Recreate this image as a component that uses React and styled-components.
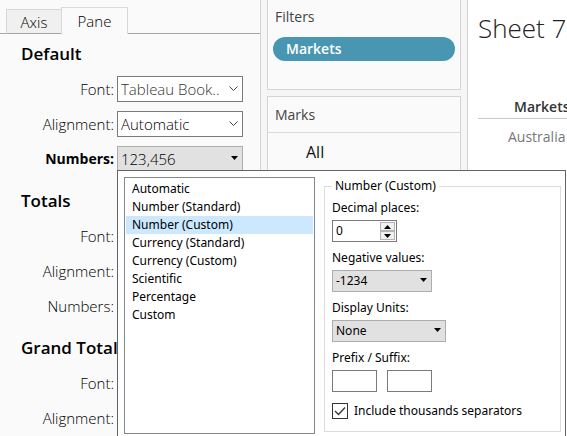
import React, { useState } from "react";
import styled, { createGlobalStyle, css } from "styled-components";

const Global = createGlobalStyle`
  *, *::before, *::after { box-sizing: border-box; }
  body { margin: 0; background: #fff; overflow: hidden; }
  button, input, select { font: inherit; color: inherit; margin: 0; border-radius: 0; }
`;

const Workspace = styled.div`
  display: grid;
  grid-template-columns: 261px 207px 1fr;
  height: 100vh;
  overflow: hidden;
  font-family: "Open Sans", "Noto Sans", sans-serif;
  font-weight: 300;
  font-size: 15px;
  line-height: 20px;
  color: #000;
`;

const FormatPane = styled.aside`
  background: #fafafa;
  border-right: 1px solid #d4d4d4;
`;

const TabBar = styled.div`
  display: flex;
  align-items: flex-end;
  height: 34px;
  padding-left: 6px;
  box-shadow: inset 0 -1px #a6a6a6;
`;

const Tab = styled.button`
  height: ${(p) => (p.$active ? 27 : 25)}px;
  width: ${(p) => (p.$active ? 67 : 55)}px;
  padding: 0;
  border: 1px solid #d9d9d9;
  border-bottom: ${(p) => (p.$active ? "0" : "1px solid #a6a6a6")};
  border-right-width: ${(p) => (p.$active ? 1 : 0)}px;
  background: ${(p) => (p.$active ? "#fafafa" : "#f0f0f0")};
`;

const Section = styled.section`
  height: 147px;
  padding: 10px 17px 0 21px;
`;

const SectionTitle = styled.h2`
  margin: 0 0 12px;
  font-size: 17px;
  line-height: 20px;
  font-weight: 600;
  color: #000;
  white-space: nowrap;
`;

const Row = styled.div`
  position: relative;
  display: grid;
  grid-template-columns: 93px 1fr;
  column-gap: 3px;
  align-items: center;
  height: 26px;
  margin-bottom: 9px;
`;

const RowLabel = styled.label`
  justify-self: end;
  font-size: ${(p) => (p.$strong ? 14 : 15)}px;
  font-weight: ${(p) => (p.$strong ? 700 : 300)};
`;

const Picker = styled.div`
  position: relative;
  display: flex;
  svg {
    position: absolute;
    right: 5px;
    top: 50%;
    margin-top: -3px;
    pointer-events: none;
  }
`;

const Select = styled.select`
  appearance: none;
  width: 100%;
  height: ${(p) => (p.$compact ? 22 : 26)}px;
  padding: 0 3px;
  border: 1px solid ${(p) => (p.$filled ? "#adadad" : "#7a7a7a")};
  background: ${(p) => (p.$filled ? "#e1e1e1" : "#fff")};
  color: ${(p) => (p.$muted ? "#333" : "#000")};
`;

const Shelves = styled.div`
  display: flex;
  flex-direction: column;
  gap: 6px;
  padding: 0 6px;
  background: #f5f5f5;
  border-right: 1px solid #d4d4d4;
`;

const Card = styled.section`
  background: #fafafa;
  border: 1px solid #d4d4d4;
  border-top-width: ${(p) => (p.$first ? 0 : 1)}px;
  ${(p) => (p.$first ? css`height: 90px;` : css`flex: 1;`)}
`;

const CardTitle = styled.h3`
  margin: 0;
  padding: ${(p) => (p.$ruled ? "8px 7px 7px" : "7px 7px 10px")};
  font-size: 14px;
  line-height: 20px;
  font-weight: 400;
  color: #444;
  border-bottom: ${(p) => (p.$ruled ? "1px solid #dcdcdc" : "0")};
`;

const Pill = styled.button`
  display: block;
  width: calc(100% - 10px);
  height: 24px;
  margin: 0 5px;
  padding: 0 13px;
  border: 0;
  border-radius: 12px;
  background: #4996b2;
  color: #fff;
  font-size: 14px;
  font-weight: 600;
  text-align: left;
`;

const MarksItem = styled.div`
  padding: 9px 38px;
  font-size: 16px;
  font-weight: 400;
  color: #111;
`;

const Sheet = styled.main`
  min-width: 0;
  padding: 12px 0 0 10px;
  background: #fff;
  overflow: hidden;
`;

const SheetTitle = styled.h1`
  margin: 0 0 52px;
  font-size: 26px;
  line-height: 32px;
  font-weight: 300;
  color: #222;
  white-space: nowrap;
`;

const Crosstab = styled.table`
  width: 100%;
  border-collapse: collapse;
  font-size: 14px;
  line-height: 20px;
  th {
    height: 22px;
    padding: 0 0 0 36px;
    border-bottom: 1px solid #c8c8c8;
    text-align: left;
    font-weight: 600;
    color: #333;
  }
  td {
    height: 38px;
    padding: 0 0 0 30px;
    font-weight: 400;
    color: #777;
  }
`;

const Popup = styled.div`
  position: absolute;
  z-index: 2;
  left: 96px;
  top: 24px;
  display: grid;
  grid-template-columns: 191px 237px;
  gap: 9px;
  width: 449px;
  height: 280px;
  padding: 6px;
  background: #fff;
  border: 1px solid #646464;
  font-family: "Noto Sans", sans-serif;
  font-weight: 400;
  font-size: 12px;
  line-height: 18px;
  color: #000;
`;

const FormatList = styled.select`
  height: 257px;
  padding: 2px 1px;
  border: 1px solid #828790;
  background: #fff;
  overflow: hidden;
  outline: 0;
  option {
    height: 18px;
    min-height: 18px;
    padding: 0 6px;
    line-height: 18px;
    color: #000;
  }
  option:checked {
    background: #cce8ff linear-gradient(#cce8ff, #cce8ff);
    color: #000;
  }
`;

const Options = styled.fieldset`
  height: 255px;
  margin: 0;
  padding: 4px 7px 0;
  border: 1px solid #dcdcdc;
  legend {
    padding: 0 3px;
    line-height: 18px;
  }
`;

const Field = styled.div`
  display: flex;
  flex-direction: column;
  align-items: flex-start;
  gap: 3px;
  height: 50px;
`;

const FieldLabel = styled.label`
  line-height: 18px;
`;

const Sized = styled.div`
  width: ${(p) => p.$width}px;
`;

const Spinner = styled.div`
  display: flex;
  width: 65px;
  height: 22px;
  padding: 1px;
  border: 1px solid #7a7a7a;
  input {
    flex: 1;
    min-width: 0;
    padding: 0 2px;
    border: 0;
    outline: 0;
    background: none;
  }
`;

const SpinButtons = styled.div`
  display: grid;
  grid-template-rows: 1fr 1fr;
  width: 15px;
  button {
    display: grid;
    place-items: center;
    min-height: 0;
    padding: 0;
    border: 1px solid #b4b4b4;
    background: #f0f0f0;
  }
`;

const Affixes = styled.div`
  display: flex;
  gap: 10px;
`;

const TextBox = styled.input`
  width: 45px;
  height: 22px;
  padding: 0 3px;
  border: 1px solid #7a7a7a;
`;

const CheckLabel = styled.label`
  display: flex;
  align-items: center;
  gap: 6px;
  height: 18px;
  margin-top: 3px;
  white-space: nowrap;
`;

const CheckBox = styled.span`
  display: grid;
  width: 16px;
  height: 16px;
  border: 1px solid #333;
  input {
    grid-area: 1 / 1;
    appearance: none;
    width: 14px;
    height: 14px;
  }
  svg {
    grid-area: 1 / 1;
    pointer-events: none;
  }
`;

const Chevron = () => (
  <svg width="9" height="5" viewBox="0 0 9 5" aria-hidden="true">
    <path d="M.5 .5 4.5 4.5 8.5 .5" fill="none" stroke="#444" />
  </svg>
);

const Arrow = ({ up }) => (
  <svg width="7" height="4" viewBox="0 0 7 4" aria-hidden="true">
    <path d={up ? "M0 4 3.5 0 7 4z" : "M0 0h7L3.5 4z"} fill="#000" />
  </svg>
);

function Dropdown({ id, value, filled, muted, compact }) {
  return (
    <Picker>
      <Select id={id} defaultValue={value} $filled={filled} $muted={muted} $compact={compact}>
        <option>{value}</option>
      </Select>
      {filled ? <Arrow /> : <Chevron />}
    </Picker>
  );
}

const formats = [
  "Automatic",
  "Number (Standard)",
  "Number (Custom)",
  "Currency (Standard)",
  "Currency (Custom)",
  "Scientific",
  "Percentage",
  "Custom",
];

function NumberFormatPopup() {
  const [places, setPlaces] = useState(0);
  const [separators, setSeparators] = useState(true);
  return (
    <Popup role="dialog" aria-label="Number format">
      <FormatList size={14} defaultValue="Number (Custom)" aria-label="Format">
        {formats.map((f) => (
          <option key={f}>{f}</option>
        ))}
      </FormatList>
      <Options>
        <legend>Number (Custom)</legend>
        <Field>
          <FieldLabel htmlFor="places">Decimal places:</FieldLabel>
          <Spinner>
            <input
              id="places"
              value={places}
              onChange={(e) => setPlaces(Number(e.target.value) || 0)}
            />
            <SpinButtons>
              <button aria-label="Increase" onClick={() => setPlaces(places + 1)}>
                <Arrow up />
              </button>
              <button aria-label="Decrease" onClick={() => setPlaces(Math.max(0, places - 1))}>
                <Arrow />
              </button>
            </SpinButtons>
          </Spinner>
        </Field>
        <Field>
          <FieldLabel htmlFor="negative">Negative values:</FieldLabel>
          <Sized $width={100}>
            <Dropdown id="negative" value="-1234" filled compact />
          </Sized>
        </Field>
        <Field>
          <FieldLabel htmlFor="units">Display Units:</FieldLabel>
          <Sized $width={114}>
            <Dropdown id="units" value="None" filled compact />
          </Sized>
        </Field>
        <Field>
          <FieldLabel htmlFor="prefix">Prefix / Suffix:</FieldLabel>
          <Affixes>
            <TextBox id="prefix" />
            <TextBox aria-label="Suffix" />
          </Affixes>
        </Field>
        <CheckLabel>
          <CheckBox>
            <input
              type="checkbox"
              checked={separators}
              onChange={(e) => setSeparators(e.target.checked)}
            />
            {separators && (
              <svg width="14" height="14" viewBox="0 0 14 14" aria-hidden="true">
                <path d="M2 7 5.5 10.5 12 3.5" fill="none" stroke="#333" strokeWidth="1.3" />
              </svg>
            )}
          </CheckBox>
          Include thousands separators
        </CheckLabel>
      </Options>
    </Popup>
  );
}

function FormatSection({ title, id, open }) {
  return (
    <Section>
      <SectionTitle>{title}</SectionTitle>
      <Row>
        <RowLabel htmlFor={id + "-font"}>Font:</RowLabel>
        <Dropdown id={id + "-font"} value="Tableau Book.." muted />
      </Row>
      <Row>
        <RowLabel htmlFor={id + "-align"}>Alignment:</RowLabel>
        <Dropdown id={id + "-align"} value="Automatic" />
      </Row>
      <Row>
        <RowLabel htmlFor={id + "-numbers"} $strong={open}>Numbers:</RowLabel>
        <Dropdown id={id + "-numbers"} value="123,456" filled />
        {open && <NumberFormatPopup />}
      </Row>
    </Section>
  );
}

export default function App() {
  return (
    <>
      <Global />
      <Workspace>
        <FormatPane>
          <TabBar role="tablist">
            <Tab role="tab" aria-selected="false">Axis</Tab>
            <Tab role="tab" aria-selected="true" $active>Pane</Tab>
          </TabBar>
          <FormatSection title="Default" id="default" open />
          <FormatSection title="Totals" id="totals" />
          <FormatSection title="Grand Totals" id="grand" />
        </FormatPane>
        <Shelves>
          <Card $first>
            <CardTitle>Filters</CardTitle>
            <Pill>Markets</Pill>
          </Card>
          <Card>
            <CardTitle $ruled>Marks</CardTitle>
            <MarksItem>All</MarksItem>
          </Card>
        </Shelves>
        <Sheet>
          <SheetTitle>Sheet 7</SheetTitle>
          <Crosstab>
            <thead>
              <tr><th>Markets</th></tr>
            </thead>
            <tbody>
              <tr><td>Australia</td></tr>
            </tbody>
          </Crosstab>
        </Sheet>
      </Workspace>
    </>
  );
}
